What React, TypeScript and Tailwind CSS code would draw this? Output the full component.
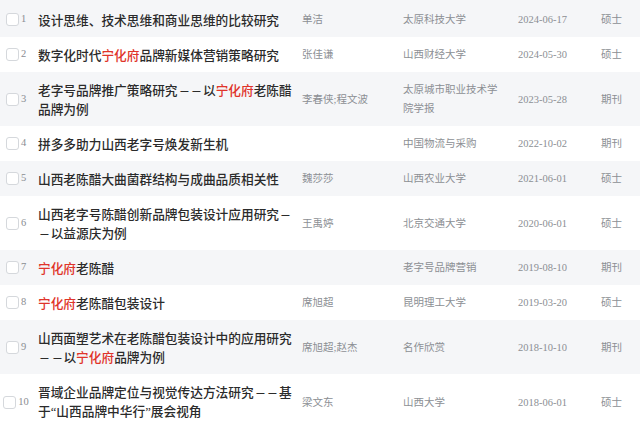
const rows = [
  { t: ['设计思维、技术思维和商业思维的比较研究'], a: '单洁', o: ['太原科技大学'], d: '2024-06-17', k: '硕士' },
  { t: ['数字化时代[宁化府]品牌新媒体营销策略研究'], a: '张佳谦', o: ['山西财经大学'], d: '2024-05-30', k: '硕士' },
  { t: ['老字号品牌推广策略研究——以[宁化府]老陈醋', '品牌为例'], a: '李春侠;程文波', o: ['太原城市职业技术学', '院学报'], d: '2023-05-28', k: '期刊' },
  { t: ['拼多多助力山西老字号焕发新生机'], a: '', o: ['中国物流与采购'], d: '2022-10-02', k: '期刊' },
  { t: ['山西老陈醋大曲菌群结构与成曲品质相关性'], a: '魏莎莎', o: ['山西农业大学'], d: '2021-06-01', k: '硕士' },
  { t: ['山西老字号陈醋创新品牌包装设计应用研究—', '—以益源庆为例'], a: '王禹婷', o: ['北京交通大学'], d: '2020-06-01', k: '硕士' },
  { t: ['[宁化府]老陈醋'], a: '', o: ['老字号品牌营销'], d: '2019-08-10', k: '期刊' },
  { t: ['[宁化府]老陈醋包装设计'], a: '席旭超', o: ['昆明理工大学'], d: '2019-03-20', k: '硕士' },
  { t: ['山西面塑艺术在老陈醋包装设计中的应用研究', '——以[宁化府]品牌为例'], a: '席旭超;赵杰', o: ['名作欣赏'], d: '2018-10-10', k: '期刊' },
  { t: ['晋域企业品牌定位与视觉传达方法研究——基', '于“山西品牌中华行”展会视角'], a: '梁文东', o: ['山西大学'], d: '2018-06-01', k: '硕士' },
]

function Line({ text }: { text: string }) {
  const parts = text.split(/(\[[^\]]+\]|—|“|”)/).filter(Boolean)
  return (
    <div className="whitespace-nowrap">
      {parts.map((p, i) => {
        if (p.startsWith('[')) return <span key={i} className="text-[#e0342a]">{p.slice(1, -1)}</span>
        if (p === '—') return <span key={i} className="inline-block w-[1em] text-center scale-x-[0.78]">—</span>
        if (p === '“' || p === '”') return <span key={i} className="font-['Liberation_Serif',serif]">{p}</span>
        return <span key={i}>{p}</span>
      })}
    </div>
  )
}

export default function App() {
  return (
    <div className="w-[640px] h-[423px] overflow-hidden bg-white font-['Liberation_Serif','Noto_Sans_CJK_SC',serif]">
      {rows.map((r, i) => (
        <div
          key={i}
          className={`flex items-center py-[8px] ${i === 0 ? 'pt-[10px]' : ''} ${i % 2 === 0 ? 'bg-[#f5f6f8]' : 'bg-white'}`}
        >
          <div className="w-[32px] shrink-0 flex items-center justify-center gap-[2px]">
            <div className="w-[13px] h-[13px] rounded-[3px] border border-[#d5d8dc] bg-white" />
            <span className="text-[10.5px] leading-none text-[#8a8d92]">{i + 1}</span>
          </div>
          <div className="w-[264px] ml-[6px] shrink-0 font-['Noto_Sans_CJK_SC',sans-serif] text-[12.7px] leading-[19px] font-medium text-[#2b2b2b]">
            {r.t.map((l, j) => (
              <Line key={j} text={l} />
            ))}
          </div>
          <div className="w-[101px] shrink-0 text-[10.5px] leading-[19px] text-[#8c8f94]">{r.a}</div>
          <div className="w-[115px] shrink-0 text-[10.5px] leading-[19px] text-[#8c8f94]">
            {r.o.map((l, j) => (
              <div key={j} className="whitespace-nowrap">{l}</div>
            ))}
          </div>
          <div className="w-[83px] shrink-0 text-[10.5px] leading-[19px] text-[#8c8f94]">{r.d}</div>
          <div className="text-[10.5px] leading-[19px] text-[#8c8f94]">{r.k}</div>
        </div>
      ))}
    </div>
  )
}
